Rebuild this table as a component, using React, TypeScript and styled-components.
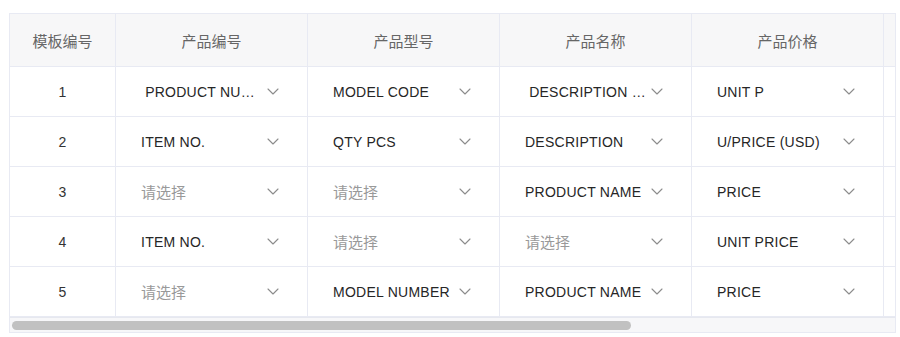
import React from "react";
import styled, { createGlobalStyle } from "styled-components";

const GlobalStyle = createGlobalStyle`
  html, body { margin: 0; padding: 0; background: #ffffff; }
  body {
    font-family: "Liberation Sans", "Noto Sans CJK SC", Arial, sans-serif;
    -webkit-font-smoothing: antialiased;
  }
`;

const Page = styled.div`
  padding: 13px 0 0 9px;
`;

const Frame = styled.div`
  width: 887px;
  box-sizing: border-box;
  border: 1px solid #e8eaf3;
  background: #fff;
`;

const Viewport = styled.div`
  overflow: hidden;
`;

const ScrollTrack = styled.div`
  height: 15px;
  box-sizing: border-box;
  background: #f7f7f9;
  border-top: 1px solid #e6e8ef;
  display: flex;
  align-items: center;
  padding: 0 2px;
`;

const ScrollThumb = styled.div`
  height: 9px;
  border-radius: 5px;
  background: #c1c1c1;
`;

const Table = styled.table<{ $w: number }>`
  border-collapse: separate;
  border-spacing: 0;
  table-layout: fixed;
  width: ${(p) => p.$w}px;
`;

const HeadCell = styled.th<{ $w: number }>`
  box-sizing: border-box;
  width: ${(p) => p.$w}px;
  padding: 0;
  background: #f7f7f8;
  border-right: 1px solid #e8eaf3;
  border-bottom: 1px solid #e8eaf3;
  font-weight: 400;
`;

const HeadInner = styled.div`
  height: 52px;
  display: flex;
  align-items: center;
  justify-content: center;
  font-size: 15px;
  color: #666666;
`;

const BodyCell = styled.td`
  padding: 0;
  border-right: 1px solid #e8eaf3;
  border-bottom: 1px solid #e8eaf3;
`;

const IndexInner = styled.div`
  height: 49px;
  display: flex;
  align-items: center;
  justify-content: center;
  font-size: 14px;
  color: #333333;
`;

const CellInner = styled.div`
  height: 49px;
  display: flex;
  align-items: center;
  padding: 0 16px;
`;

const Select = styled.div`
  flex: 1;
  min-width: 0;
  height: 32px;
  display: flex;
  align-items: center;
  padding: 0 12px 0 9px;
  cursor: pointer;
`;

const Value = styled.span<{ $placeholder?: boolean }>`
  flex: 1;
  min-width: 0;
  margin-right: 4px;
  white-space: pre;
  overflow: hidden;
  text-overflow: ellipsis;
  font-size: ${(p) => (p.$placeholder ? "15px" : "14px")};
  letter-spacing: ${(p) => (p.$placeholder ? "0" : "0.25px")};
  color: ${(p) => (p.$placeholder ? "#999999" : "#262626")};
`;

const Chevron = styled.svg`
  width: 12px;
  height: 7px;
  flex: none;
`;

const ChevronIcon = () => (
  <Chevron viewBox="0 0 12 7" fill="none">
    <polyline
      points="1,1 6,6 11,1"
      stroke="#8c8c8c"
      strokeWidth="1.1"
      strokeLinecap="round"
      strokeLinejoin="round"
    />
  </Chevron>
);

const columns = [
  { title: "模板编号", width: 106 },
  { title: "产品编号", width: 192 },
  { title: "产品型号", width: 192 },
  { title: "产品名称", width: 192 },
  { title: "产品价格", width: 192 },
  { title: "产品数量", width: 192 },
  { title: "备注", width: 194 },
];

const rows: (string | null)[][] = [
  [" PRODUCT NUMBER", "MODEL CODE", " DESCRIPTION  OF GOODS", "UNIT P", null, null],
  ["ITEM NO.", "QTY PCS", "DESCRIPTION", "U/PRICE (USD)", null, null],
  [null, null, "PRODUCT NAME", "PRICE", null, null],
  ["ITEM NO.", null, null, "UNIT PRICE", null, null],
  [null, "MODEL NUMBER", "PRODUCT NAME", "PRICE", null, null],
];

const tableWidth = columns.reduce((s, c) => s + c.width, 0);
const viewportWidth = 885;
const trackInner = viewportWidth - 4;
const thumbWidth = Math.round((trackInner * viewportWidth) / tableWidth);

const SelectCell = ({ value }: { value: string | null }) => (
  <BodyCell>
    <CellInner>
      <Select>
        <Value $placeholder={value === null}>{value ?? "请选择"}</Value>
        <ChevronIcon />
      </Select>
    </CellInner>
  </BodyCell>
);

export default function App() {
  return (
    <>
      <GlobalStyle />
      <Page>
        <Frame>
          <Viewport>
            <Table $w={tableWidth}>
              <thead>
                <tr>
                  {columns.map((c) => (
                    <HeadCell key={c.title} $w={c.width}>
                      <HeadInner>{c.title}</HeadInner>
                    </HeadCell>
                  ))}
                </tr>
              </thead>
              <tbody>
                {rows.map((r, i) => (
                  <tr key={i}>
                    <BodyCell>
                      <IndexInner>{i + 1}</IndexInner>
                    </BodyCell>
                    {r.map((v, j) => (
                      <SelectCell key={j} value={v} />
                    ))}
                  </tr>
                ))}
              </tbody>
            </Table>
          </Viewport>
          <ScrollTrack>
            <ScrollThumb style={{ width: thumbWidth }} />
          </ScrollTrack>
        </Frame>
      </Page>
    </>
  );
}
